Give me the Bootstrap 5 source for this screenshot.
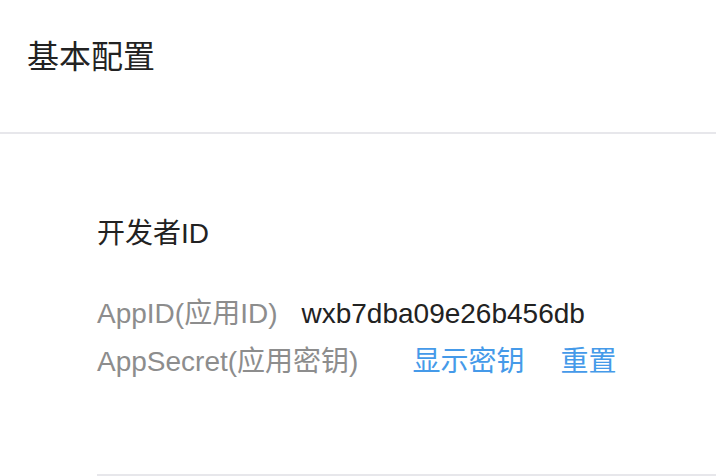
<!DOCTYPE html>
<html lang="zh-CN">
<head>
<meta charset="utf-8">
<meta name="viewport" content="width=device-width, initial-scale=1">
<title>基本配置</title>
<link href="https://cdn.jsdelivr.net/npm/bootstrap@5.3.0/dist/css/bootstrap.min.css" rel="stylesheet">
<style>
body { font-family: "Liberation Sans", "Noto Sans CJK SC", sans-serif; font-size: 28px; line-height: 48px; color: #222; background: #fff; }
.page-head { padding: 33px 27px 51px; border-bottom: 2px solid #e7e7eb; }
.page-head h1 { font-size: 32px; line-height: 48px; font-weight: 400; }
.config-block { margin-left: 97px; padding: 76px 0 88px; border-bottom: 2px solid #e7e7eb; }
.config-block h2 { font-size: 28px; line-height: 48px; font-weight: 400; margin-bottom: 32px; }
.config-label { color: #8d8d8d; font-weight: 400; margin-right: 24px; }
.config-actions { margin-left: 30px; gap: 36px; }
.config-actions a { color: #459ae9; }
</style>
</head>
<body>
<header class="page-head"><h1 class="mb-0">基本配置</h1></header>
<main>
<section class="config-block">
<h2>开发者ID</h2>
<dl class="mb-0">
<div class="d-flex"><dt class="config-label">AppID(应用ID)</dt><dd class="mb-0">wxb7dba09e26b456db</dd></div>
<div class="d-flex"><dt class="config-label">AppSecret(应用密钥)</dt><dd class="config-actions d-flex mb-0"><a class="text-decoration-none" href="#show">显示密钥</a><a class="text-decoration-none" href="#reset">重置</a></dd></div>
</dl>
</section>
</main>
<script src="https://cdn.jsdelivr.net/npm/bootstrap@5.3.0/dist/js/bootstrap.bundle.min.js"></script>
</body>
</html>
